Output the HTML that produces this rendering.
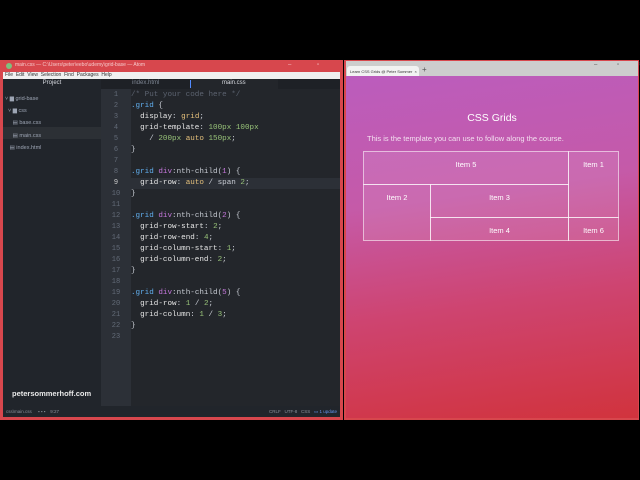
<!DOCTYPE html><html><head><style>
*{margin:0;padding:0;box-sizing:border-box}
body{width:640px;height:480px;background:#000;position:relative;overflow:hidden;font-family:"Liberation Sans",sans-serif}
.abs{position:absolute;white-space:nowrap}
.code{font-family:"Liberation Mono",monospace;font-size:7.6px;color:#c8ccd4;white-space:pre}
.k{color:#61afef}.p{color:#c678dd}.n{color:#98c379}.y{color:#e5c07b}.g{color:#5c6370}.w{color:#e6e6e6}
.cell{position:absolute;border:1px solid rgba(255,255,255,.55);background:rgba(255,255,255,.1);color:#fff;font-size:7.5px;text-align:center;padding-top:8px}
</style></head><body>
<div class="abs" style="left:0;top:60px;width:343px;height:360px;background:#d7474d"></div>
<div class="abs" style="left:6px;top:63px;width:6px;height:6px;border-radius:50%;background:#7ec07e"></div>
<div class="abs" style="left:15px;top:62px;font-size:5px;color:#f6c9cb">main.css — C:\Users\peter\eebo\udemy\grid-base — Atom</div>
<div class="abs" style="left:288px;top:62px;font-size:6px;color:#f6c9cb;letter-spacing:12px">– ▫ ×</div>
<div class="abs" style="left:3px;top:72px;width:337px;height:7px;background:#f0f0f0;font-size:5px;color:#333;padding-left:2px">File &nbsp;Edit &nbsp;View &nbsp;Selection &nbsp;Find &nbsp;Packages &nbsp;Help</div>
<div class="abs" style="left:3px;top:79px;width:98px;height:327px;background:#21252b"></div>
<div class="abs" style="left:101px;top:79px;width:239px;height:327px;background:#23262b"></div>
<div class="abs" style="left:101px;top:89px;width:30px;height:317px;background:#2c3037"></div>
<div class="abs" style="left:101px;top:79px;width:239px;height:10px;background:#1e2126"></div>
<div class="abs" style="left:190px;top:79px;width:88px;height:10px;background:#23262b"></div>
<div class="abs" style="left:190px;top:80px;width:1px;height:8px;background:#528bff"></div>
<div class="abs" style="left:3px;top:80px;width:98px;text-align:center;font-size:6px;color:#d7dae0">Project</div>
<div class="abs" style="left:132px;top:80px;font-size:6px;color:#7d8592">index.html</div>
<div class="abs" style="left:222px;top:80px;font-size:6px;color:#d7dae0">main.css</div>
<div class="abs" style="left:3px;top:127px;width:98px;height:12px;background:rgba(255,255,255,.05)"></div>
<div class="abs" style="left:5px;top:93px;font-size:5.5px;color:#9da5b4;line-height:12.2px">˅ ▆ grid-base<br>&nbsp;&nbsp;˅ ▆ css<br>&nbsp;&nbsp;&nbsp;&nbsp;&nbsp;▤ base.css<br>&nbsp;&nbsp;&nbsp;&nbsp;&nbsp;▤ main.css<br>&nbsp;&nbsp;&nbsp;▤ index.html</div>
<div class="abs" style="left:101px;top:178px;width:239px;height:11px;background:#2c3037"></div>
<div class="abs" style="left:12px;top:389px;font-size:7.5px;color:#e8e8e8;font-weight:bold">petersommerhoff.com</div>
<div class="abs code" style="left:131px;top:90px;line-height:11px"><span class="g">/* Put your code here */</span>
<span class="k">.grid</span> {
  <span class="w">display</span>: <span class="y">grid</span>;
  <span class="w">grid-template</span>: <span class="n">100px 100px</span>
    / <span class="n">200px</span> <span class="y">auto</span> <span class="n">150px</span>;
}

<span class="k">.grid</span> <span class="p">div</span>:nth-child(<span class="p">1</span>) {
  <span class="w">grid-row</span>: <span class="y">auto</span> / span <span class="n">2</span>;
}

<span class="k">.grid</span> <span class="p">div</span>:nth-child(<span class="p">2</span>) {
  <span class="w">grid-row-start</span>: <span class="n">2</span>;
  <span class="w">grid-row-end</span>: <span class="n">4</span>;
  <span class="w">grid-column-start</span>: <span class="n">1</span>;
  <span class="w">grid-column-end</span>: <span class="n">2</span>;
}

<span class="k">.grid</span> <span class="p">div</span>:nth-child(<span class="p">5</span>) {
  <span class="w">grid-row</span>: <span class="n">1</span> / <span class="n">2</span>;
  <span class="w">grid-column</span>: <span class="n">1</span> / <span class="n">3</span>;
}
</div>
<div class="abs" style="left:101px;top:90px;width:30px;font-family:'Liberation Mono',monospace;font-size:7px;color:#636b78;text-align:center;line-height:11px">1<br>2<br>3<br>4<br>5<br>6<br>7<br>8<br><span style="color:#ccc">9</span><br>10<br>11<br>12<br>13<br>14<br>15<br>16<br>17<br>18<br>19<br>20<br>21<br>22<br>23</div>
<div class="abs" style="left:3px;top:406px;width:337px;height:11px;background:#21252b;font-size:4.5px;color:#8a909a;padding:3px 3px">css\main.css &nbsp;&nbsp;&nbsp; ▪ ▪ ▪ &nbsp;&nbsp; 9:27<span style="float:right">CRLF &nbsp; UTF-8 &nbsp; CSS &nbsp; <span style="color:#6494ed">▭ 1 update</span></span></div>
<div class="abs" style="left:344px;top:60px;width:295px;height:360px;background:#d7474d"></div>
<div class="abs" style="left:346px;top:61px;width:292px;height:15px;background:#cdcdcd"></div>
<div class="abs" style="left:347px;top:66px;width:72px;height:10px;background:#f2f2f2;border-radius:3px 3px 0 0;font-size:4px;color:#333;padding:3px 3px">Learn CSS Grids @ Peter Sommer &nbsp;×</div>
<div class="abs" style="left:422px;top:65px;font-size:8px;color:#555">+</div>
<div class="abs" style="left:594px;top:62px;font-size:6px;color:#555;letter-spacing:9px">– ▫ ×</div>
<div class="abs" style="left:346px;top:76px;width:292px;height:342px;background:linear-gradient(172deg,#bb5cbd 0%,#c55aa8 35%,#ce4470 65%,#d1333d 100%)"></div>
<div class="abs" style="left:346px;top:112px;width:292px;text-align:center;color:#fff;font-size:10.5px">CSS Grids</div>
<div class="abs" style="left:367px;top:134px;color:#f3e0f0;font-size:7.5px">This is the template you can use to follow along the course.</div>
<div class="cell" style="left:363px;top:151px;width:206px;height:34px">Item 5</div>
<div class="cell" style="left:568px;top:151px;width:51px;height:67px">Item 1</div>
<div class="cell" style="left:363px;top:184px;width:68px;height:57px">Item 2</div>
<div class="cell" style="left:430px;top:184px;width:139px;height:34px">Item 3</div>
<div class="cell" style="left:430px;top:217px;width:139px;height:24px">Item 4</div>
<div class="cell" style="left:568px;top:217px;width:51px;height:24px">Item 6</div>
</body></html>
